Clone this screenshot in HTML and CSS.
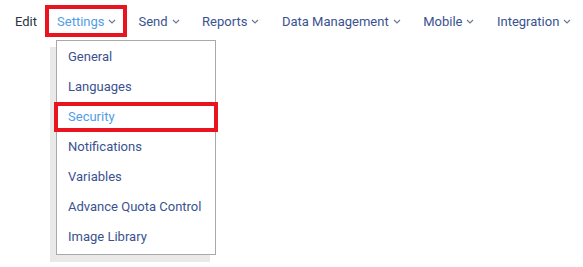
FILE: index.html
```html
<!DOCTYPE html>
<html lang="en">
<head>
    <meta charset="UTF-8">
    <title>Settings menu</title>
    <link rel="stylesheet" href="styles.css">
</head>
<body>
    <nav class="topnav">
        <span class="nav-item plain">Edit</span>
        <div class="nav-wrap">
            <span class="nav-item active highlight">Settings <svg class="chev" viewBox="0 0 8 5"><path d="M1 1l3 3 3-3"/></svg></span>
            <ul class="dropdown">
                <li>General</li>
                <li>Languages</li>
                <li class="current highlight">Security</li>
                <li>Notifications</li>
                <li>Variables</li>
                <li>Advance Quota Control</li>
                <li>Image Library</li>
            </ul>
        </div>
        <span class="nav-item">Send <svg class="chev" viewBox="0 0 8 5"><path d="M1 1l3 3 3-3"/></svg></span>
        <span class="nav-item">Reports <svg class="chev" viewBox="0 0 8 5"><path d="M1 1l3 3 3-3"/></svg></span>
        <span class="nav-item">Data Management <svg class="chev" viewBox="0 0 8 5"><path d="M1 1l3 3 3-3"/></svg></span>
        <span class="nav-item">Mobile <svg class="chev" viewBox="0 0 8 5"><path d="M1 1l3 3 3-3"/></svg></span>
        <span class="nav-item">Integration <svg class="chev" viewBox="0 0 8 5"><path d="M1 1l3 3 3-3"/></svg></span>
    </nav>
</body>
</html>
```

FILE: styles.css
```css
:root {
    --nav-color: #3a5290;
    --active-color: #529de6;
    --mark-color: #e8141f;
}

* {
    box-sizing: border-box;
    margin: 0;
    padding: 0;
}

html, body {
    min-height: 100vh;
}

body {
    font-family: Roboto, 'Noto Sans', sans-serif;
    font-size: 13px;
    background-color: white;
    color: var(--nav-color);
}

.topnav {
    display: flex;
    align-items: flex-start;
    height: 262px;
    padding: 5px 0 0 15px;
}

.nav-item {
    display: flex;
    align-items: center;
    height: 32px;
    white-space: nowrap;
    margin-right: 22.5px;
}

.nav-item.plain {
    color: #2b3444;
    margin-right: 8px;
}

.nav-wrap {
    position: relative;
    margin-right: 11px;
}

.nav-wrap .nav-item {
    margin-right: 0;
    padding: 0 7px 0 8px;
}

.active {
    color: var(--active-color);
}

.highlight {
    border: 4px solid var(--mark-color);
}

.chev {
    width: 8px;
    height: 5px;
    margin-left: 4px;
    fill: none;
    stroke: #6a7a94;
    stroke-width: 1.2;
}

.dropdown {
    position: absolute;
    z-index: 10;
    top: 35px;
    left: 11px;
    width: 160px;
    list-style: none;
    background: white;
    border: 1px solid #a9a9a9;
    padding: 1px 0 2px;
    box-shadow: -6px 7px 0 #e9e9e9;
}

.dropdown li {
    height: 30px;
    line-height: 30px;
    padding-left: 11px;
    white-space: nowrap;
}

.dropdown li.current {
    color: var(--active-color);
    line-height: 22px;
    margin: 0 -3px;
    padding-left: 10px;
}
```
